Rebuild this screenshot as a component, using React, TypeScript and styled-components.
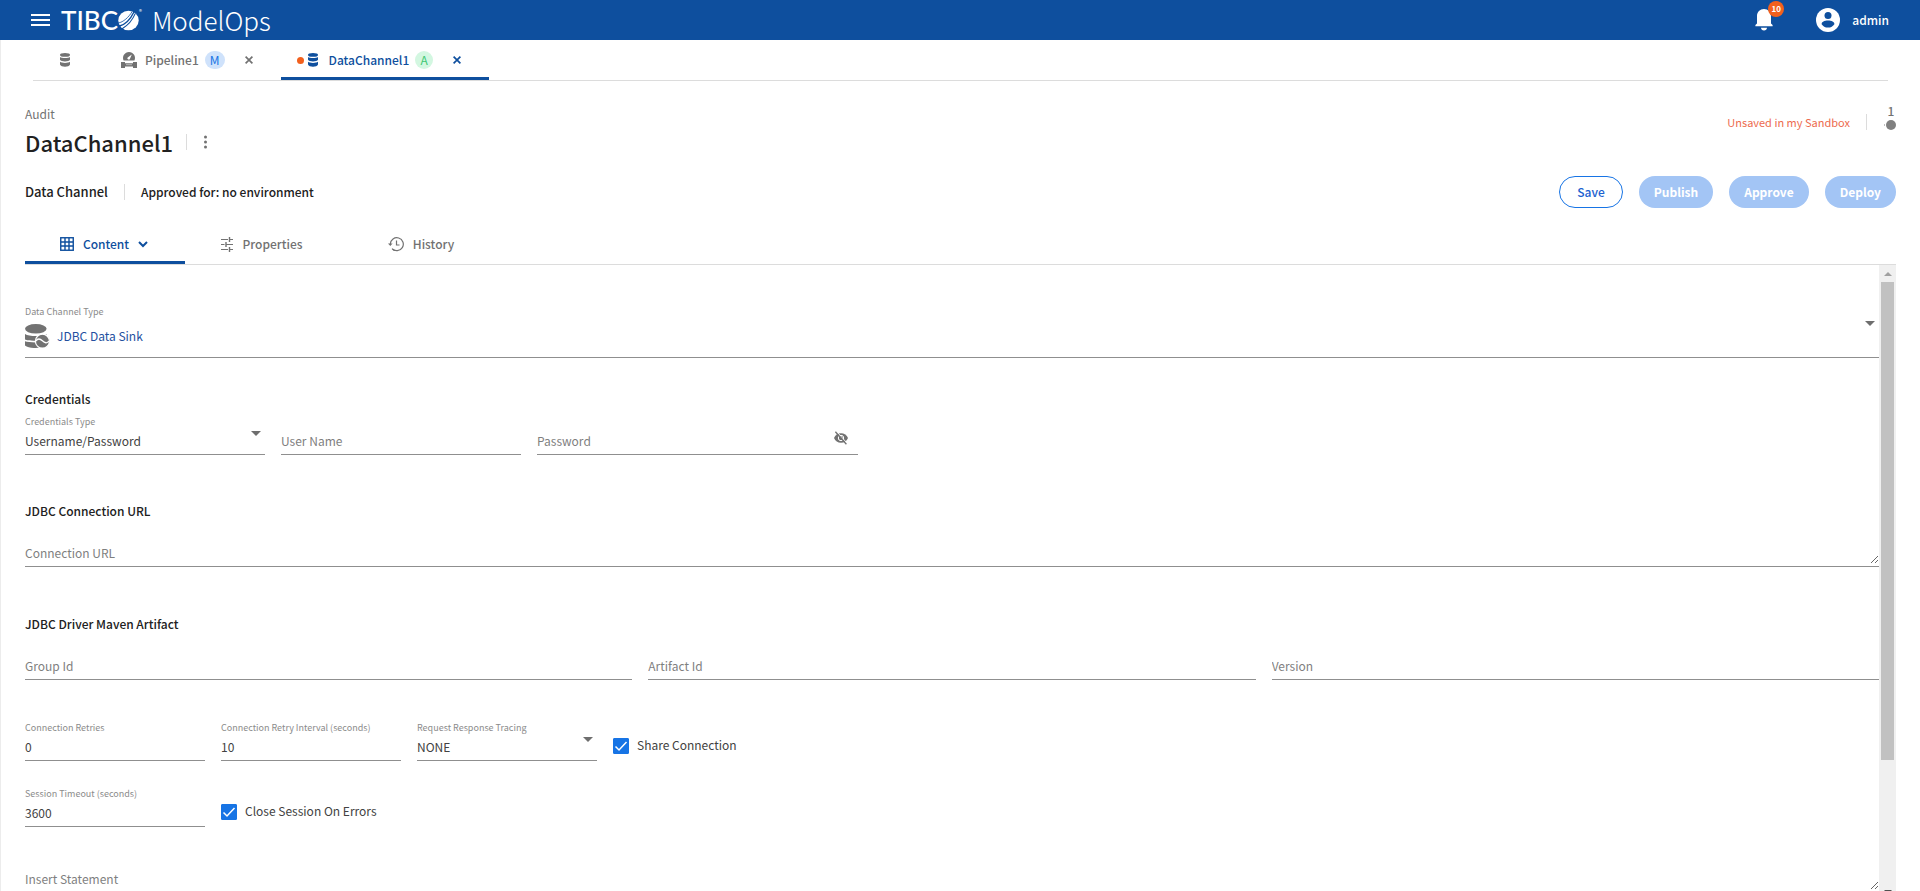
import React, { useState } from "react";
import styled, { createGlobalStyle, css } from "styled-components";

const colors = {
  brand: "#0e4f9e",
  accent: "#1774e5",
  disabled: "#a3c5f5",
  text: "#212121",
  value: "#424242",
  muted: "#727272",
  hint: "#8b8b8b",
  rule: "#dcdcdc",
  underline: "#8f8f8f",
  alert: "#f2601d",
};

const GlobalStyle = createGlobalStyle`
  *, *::before, *::after { box-sizing: border-box; }
  body {
    margin: 0;
    background: #fff;
    color: ${colors.text};
    font-family: "Noto Sans CJK SC", "Noto Sans", sans-serif;
    font-size: 12px;
    line-height: 20px;
  }
  button, input, select, textarea {
    font: inherit;
    color: inherit;
    margin: 0;
    padding: 0;
    border: 0;
    background: none;
    outline: none;
  }
  button { cursor: pointer; }
  a { color: inherit; text-decoration: none; }
  h1, h2, p { margin: 0; }
  svg { display: block; flex: none; }
`;

const Page = styled.div`
  display: flex;
  flex-direction: column;
  height: 100vh;
  overflow: hidden;
`;

const TopBar = styled.header`
  display: flex;
  align-items: center;
  flex: none;
  height: 40px;
  padding: 0 31px 0 30px;
  background: ${colors.brand};
  color: #fff;
`;

const IconButton = styled.button`
  display: flex;
  align-items: center;
  justify-content: center;
`;

const Brand = styled.a`
  display: flex;
  align-items: center;
  margin-left: 11px;
`;

const BrandName = styled.span`
  font-family: Lato, sans-serif;
  font-size: 26px;
  font-weight: 500;
  line-height: 40px;
`;

const Registered = styled.span`
  align-self: flex-start;
  margin-top: 6px;
  font-size: 6px;
  line-height: 12px;
`;

const Product = styled.span`
  margin-left: 10px;
  font-size: 26px;
  font-weight: 300;
  line-height: 40px;
`;

const TopActions = styled.div`
  display: flex;
  align-items: center;
  margin-left: auto;
`;

const BellButton = styled(IconButton)`
  position: relative;
  margin-right: 43px;
`;

const Count = styled.span`
  position: absolute;
  top: -8px;
  right: -11px;
  width: 16px;
  height: 16px;
  border-radius: 8px;
  background: ${colors.alert};
  font-size: 8px;
  font-weight: 700;
  line-height: 16px;
  text-align: center;
`;

const Account = styled.button`
  display: flex;
  align-items: center;
  gap: 12px;
  font-weight: 500;
`;

const Main = styled.main`
  display: flex;
  flex: 1;
  flex-direction: column;
  min-height: 0;
  border-left: 1px solid #ececec;
`;

const OpenTabs = styled.nav`
  display: flex;
  flex: none;
  height: 41px;
  margin: 0 32px;
  border-bottom: 1px solid ${colors.rule};
`;

const OpenTab = styled.div<{ $active?: boolean }>`
  display: flex;
  align-items: center;
  height: 40px;
  padding-top: 3px;
  color: ${(p) => (p.$active ? colors.brand : colors.muted)};
  border-bottom: 3px solid ${(p) => (p.$active ? colors.brand : "transparent")};
  font-weight: 500;
`;

const HomeTab = styled(OpenTab)`
  width: 64px;
  justify-content: center;
`;

const PipelineTab = styled(OpenTab)`
  padding-left: 24px;
  padding-right: 28px;
`;

const ChannelTab = styled(OpenTab)`
  padding-left: 16px;
  padding-right: 28px;
`;

const TabLink = styled.a`
  display: flex;
  align-items: center;
`;

const TabName = styled.span<{ $gap: number }>`
  margin-left: ${(p) => p.$gap}px;
`;

const Tag = styled.span<{ $tone: "blue" | "green" }>`
  min-width: 18px;
  height: 18px;
  margin-left: 6px;
  padding: 0 5px;
  border-radius: 9px;
  line-height: 18px;
  text-align: center;
  font-weight: 400;
  ${(p) =>
    p.$tone === "blue"
      ? css`
          background: #cfe2fb;
          color: #1774e5;
        `
      : css`
          background: #d3f7e1;
          color: #3fc774;
        `}
`;

const CloseButton = styled(IconButton)`
  margin-left: 20px;
`;

const Dirty = styled.span`
  width: 7px;
  height: 7px;
  margin-right: 4px;
  border-radius: 4px;
  background: ${colors.alert};
`;

const Heading = styled.section`
  display: flex;
  flex: none;
  justify-content: space-between;
  padding: 23px 24px 0;
`;

const Crumb = styled.a`
  display: block;
  color: ${colors.muted};
`;

const TitleRow = styled.div`
  display: flex;
  align-items: center;
  height: 36px;
`;

const Title = styled.h1`
  font-size: 22px;
  font-weight: 500;
  line-height: 36px;
`;

const Divider = styled.span`
  width: 1px;
  height: 16px;
  margin: 0 16px;
  background: ${colors.rule};
`;

const TitleDivider = styled(Divider)`
  margin-left: 13px;
`;

const Status = styled.div`
  display: flex;
  align-items: center;
  height: 36px;
  color: #ed6a4e;
  font-size: 11px;
`;

const Revision = styled.div`
  display: flex;
  flex-direction: column;
  align-items: flex-end;
  gap: 2px;
  width: 13px;
  height: 36px;
  color: ${colors.muted};
  font-size: 12px;
  font-weight: 500;
  line-height: 14px;
`;

const RevisionNumber = styled.span`
  width: 10px;
  text-align: center;
`;

const Summary = styled.section`
  display: flex;
  flex: none;
  align-items: center;
  height: 32px;
  margin: 16px 24px 0;
  font-weight: 500;
`;

const Kind = styled.h2`
  font-size: 13px;
  font-weight: 500;
  line-height: 20px;
`;

const Actions = styled.div`
  display: flex;
  gap: 16px;
  margin-left: auto;
`;

const Action = styled.button<{ $outlined?: boolean }>`
  height: 32px;
  padding: 0 15px;
  border-radius: 16px;
  font-weight: 700;
  line-height: 20px;
  ${(p) =>
    p.$outlined
      ? css`
          padding: 0 17px;
          border: 1px solid ${colors.accent};
          color: #1c62d0;
          font-weight: 500;
        `
      : css`
          background: ${colors.disabled};
          color: #fff;
        `}
`;

const ViewTabs = styled.nav`
  display: flex;
  flex: none;
  height: 41px;
  margin: 16px 24px 0;
  border-bottom: 1px solid ${colors.rule};
`;

const ViewTab = styled.button<{ $active?: boolean }>`
  display: flex;
  align-items: center;
  justify-content: center;
  gap: 9px;
  width: 160px;
  height: 40px;
  padding-top: 3px;
  padding-right: ${(p) => (p.$active ? 2 : 8)}px;
  border-bottom: 3px solid ${(p) => (p.$active ? colors.brand : "transparent")};
  color: ${(p) => (p.$active ? colors.brand : colors.muted)};
  font-weight: 500;
`;

const Panel = styled.div`
  display: flex;
  flex: 1;
  min-height: 0;
  margin: 0 24px -9px;
`;

const Form = styled.form`
  flex: 1;
  min-width: 0;
  overflow: hidden;
  padding-top: 34px;
`;

const ScrollBar = styled.div`
  display: flex;
  flex-direction: column;
  flex: none;
  width: 17px;
  background: #f0f0f0;
`;

const ScrollButton = styled.span`
  display: flex;
  align-items: center;
  justify-content: center;
  height: 17px;
`;

const ScrollTrack = styled.div`
  flex: 1;
  padding: 0 2px;
`;

const ScrollThumb = styled.div`
  height: 79.5%;
  background: #c1c1c1;
`;

const Section = styled.fieldset<{ $space: number }>`
  min-width: 0;
  margin: ${(p) => p.$space}px 0 0;
  padding: 0;
  border: 0;
`;

const Legend = styled.legend`
  height: 20px;
  padding: 0;
  font-weight: 500;
  line-height: 20px;
`;

const Row = styled.div<{ $space?: number }>`
  display: flex;
  gap: 16px;
  margin-top: ${(p) => p.$space ?? 0}px;
`;

const FieldBox = styled.div<{ $width?: number }>`
  position: relative;
  display: flex;
  flex-direction: column;
  ${(p) => (p.$width ? `width: ${p.$width}px;` : "flex: 1; min-width: 0;")}
  height: 46px;
  padding-top: 5px;
  border-bottom: 1px solid ${colors.underline};
`;

const TypeBox = styled(FieldBox)`
  height: 59px;
`;

const Label = styled.label`
  height: 16px;
  color: ${colors.hint};
  font-size: 9px;
  line-height: 16px;
`;

const valueStyle = css`
  width: 100%;
  height: 22px;
  color: ${colors.value};
  line-height: 22px;
  &::placeholder {
    color: #7f7f7f;
    opacity: 1;
  }
`;

const Input = styled.input`
  ${valueStyle}
`;

const Select = styled.select`
  ${valueStyle}
  appearance: none;
`;

const TextArea = styled.textarea`
  ${valueStyle}
  resize: vertical;
  overflow: auto;
`;

const TypeRow = styled.div`
  display: flex;
  align-items: center;
  gap: 7px;
  height: 24px;
  margin-top: 4px;
`;

const TypeSelect = styled(Select)`
  color: #24509f;
`;

const Caret = styled.span`
  position: absolute;
  right: 4px;
  top: 22px;
  pointer-events: none;
`;

const Reveal = styled(IconButton)`
  position: absolute;
  right: 10px;
  top: 22px;
  color: ${colors.muted};
`;

const CheckField = styled.div`
  display: flex;
  gap: 8px;
  padding-top: 23px;
  color: ${colors.value};
`;

const Tick = styled.span`
  position: relative;
  width: 16px;
  height: 16px;
  svg {
    position: absolute;
    inset: 0;
    pointer-events: none;
  }
`;

const CheckBox = styled.input`
  display: block;
  width: 16px;
  height: 16px;
  border-radius: 1px;
  appearance: none;
  border: 1px solid ${colors.accent};
  &:checked {
    background: ${colors.accent};
  }
`;

const CheckLabel = styled.label`
  height: 16px;
  line-height: 14px;
`;

const Hamburger = () => (
  <svg width="20" height="14" viewBox="0 0 20 14" fill="currentColor">
    <path d="M1 1h19v2H1zM1 6h19v2H1zM1 11h19v2H1z" />
  </svg>
);

const Globe = () => (
  <svg width="21" height="21" viewBox="0 0 21 21">
    <ellipse cx="10.500" cy="10.500" rx="10.200" ry="9.800" fill="#fff" />
    <g fill="none" stroke={colors.brand} strokeLinecap="round">
      <path d="M1.500 16C7 14.500 12.500 9 15.800 2.200" strokeWidth="1.400" />
      <path d="M4.500 18.400C9.500 15.500 14.500 10 17.200 3.600" strokeWidth="1.100" />
      <path d="M0.500 13C5.500 12 10.500 7.500 14 1.800" strokeWidth="0.800" />
    </g>
  </svg>
);

const Bell = () => (
  <svg width="18" height="22" viewBox="0 0 18 22" fill="currentColor">
    <path d="M9 0C5 0 2 2.900 2 7v7.500L0.400 16V17.200H17.600V16L16 14.500V7C16 2.900 13 0 9 0zM6 18.800h6c0 1.500-1.300 2.700-3 2.700s-3-1.200-3-2.700z" />
  </svg>
);

const Person = () => (
  <svg width="24" height="24" viewBox="0 0 24 24">
    <circle cx="12" cy="12" r="12" fill="#fff" />
    <circle cx="12" cy="7.600" r="3.500" fill={colors.brand} />
    <path
      d="M5.600 16.200c0-2.400 2.800-3.700 6.400-3.700s6.400 1.300 6.400 3.700c-1.300 2-3.600 3.400-6.400 3.400s-5.100-1.400-6.400-3.400z"
      fill={colors.brand}
    />
  </svg>
);

const Database = () => (
  <svg width="10" height="14" viewBox="0 0 10 14" fill="currentColor">
    <ellipse cx="5" cy="1.900" rx="5" ry="1.900" />
    <path d="M0 4C1.500 5.400 8.500 5.400 10 4V6.800C9 9 1 9 0 6.800z" />
    <path d="M0 8.800C1.500 10.300 8.500 10.300 10 8.800V11.600C9 14.600 1 14.600 0 11.600z" />
  </svg>
);

const Pipeline = () => (
  <svg width="16" height="16" viewBox="0 0 16 16" fill="currentColor">
    <path
      d="M8 0a6 6 0 0 0-5.400 8.600h10.800A6 6 0 0 0 8 0zM7 7.300a1.300 1.300 0 0 1-.3-1.900L10.800 2.500 8.900 7a1.300 1.300 0 0 1-1.900.3z"
      fillRule="evenodd"
    />
    <path d="M0 10h4v1.200h8V10h4v6h-4v-1.600H4V16H0z" />
    <path d="M5 12.200h6v1H5z" fill="#fff" fillOpacity="0.500" />
  </svg>
);

const Cross = () => (
  <svg width="8" height="8" viewBox="0 0 8 8" stroke="currentColor" strokeWidth="1.700">
    <path d="M0.600 0.600l6.800 6.800M7.400 0.600L0.600 7.400" />
  </svg>
);

const Kebab = () => (
  <svg width="5" height="14" viewBox="0 0 5 14" fill={colors.muted}>
    <circle cx="2.500" cy="2" r="1.500" />
    <circle cx="2.500" cy="7" r="1.500" />
    <circle cx="2.500" cy="12" r="1.500" />
  </svg>
);

const RevisionDot = () => (
  <svg width="13" height="10" viewBox="0 0 13 10" fill="#808080">
    <circle cx="8" cy="5" r="5" />
    <path d="M1 4.500h1v1H1z" />
  </svg>
);

const Grid = () => (
  <svg width="14" height="14" viewBox="0 0 14 14" fill="none" stroke="currentColor">
    <rect x="0.750" y="0.750" width="12.500" height="12.500" strokeWidth="1.400" />
    <path d="M5 1v12M9 1v12M1 5h12M1 9h12" strokeWidth="1.400" />
  </svg>
);

const Chevron = () => (
  <svg width="10" height="7" viewBox="0 0 10 7" fill="none" stroke="currentColor" strokeWidth="2">
    <path d="M1 1l4 4 4-4" />
  </svg>
);

const Sliders = () => (
  <svg width="14" height="16" viewBox="0 0 14 16" fill="none" stroke="currentColor">
    <path d="M1 3.500h7M1 8.500h3.500M6 8.500h7M1 13.500h7M9.500 3.500H13M9.500 13.500H13" strokeWidth="1.200" />
    <path d="M9.500 1v5M6 6v5M9.500 11v5" strokeWidth="1.400" />
  </svg>
);

const History = () => (
  <svg width="16" height="16" viewBox="0 0 16 16" fill="none" stroke="currentColor">
    <path d="M2.300 8a6.500 6.500 0 1 1 1.700 4.600" strokeWidth="1.200" />
    <path d="M4.600 13.200a6.500 6.500 0 0 0 3 1.300" strokeWidth="1.200" />
    <path d="M8.500 4.600V9h3" strokeWidth="1.200" />
    <path d="M0 7.400h4.600L2.300 10z" fill="currentColor" stroke="none" />
  </svg>
);

const DataSink = () => (
  <svg width="25" height="24" viewBox="0 0 25 24">
    <g fill="#727272">
      <ellipse cx="10.800" cy="4.800" rx="10.800" ry="4.800" />
      <path d="M0 10C4 12.800 17.500 12.800 21.500 10V14C17 17.300 4 17.300 0 15.500z" />
      <path d="M0 17.300C3.500 18.800 17.500 18.800 21 17.300V20.500C17 25 4 25 0 21.500z" />
    </g>
    <circle cx="17.400" cy="17.200" r="7" fill="#727272" stroke="#fff" strokeWidth="1.200" />
    <path
      d="M10.800 17C12.800 14.200 15 14.500 17.400 16.800S22 19.600 24 17.200"
      fill="none"
      stroke="#fff"
      strokeWidth="1.300"
    />
  </svg>
);

const DownCaret = () => (
  <svg width="10" height="5" viewBox="0 0 10 5" fill="#6e6e6e">
    <path d="M0 0h10L5 5z" />
  </svg>
);

const EyeOff = () => (
  <svg width="14" height="14" viewBox="0 0 14 14">
    <path
      d="M7 2.200C3.800 2.200 1.200 4.100 0 7c1.200 2.900 3.800 4.800 7 4.800S12.800 9.900 14 7C12.800 4.100 10.200 2.200 7 2.200z"
      fill="currentColor"
    />
    <circle cx="7" cy="7" r="2.700" fill="none" stroke="#fff" strokeWidth="1" />
    <path d="M2.400 0.300l11 12.200" stroke="#fff" strokeWidth="1" />
    <path d="M1.400 0.800l11 12.400" stroke="currentColor" strokeWidth="1.300" />
  </svg>
);

const TickMark = () => (
  <svg width="16" height="16" viewBox="0 0 16 16" fill="none" stroke="#fff" strokeWidth="1.500">
    <path d="M2.500 8.500l3.500 3.500 7.500-8" />
  </svg>
);

const ArrowUp = () => (
  <svg width="8" height="4" viewBox="0 0 8 4" fill="#a0a0a0">
    <path d="M4 0l4 4H0z" />
  </svg>
);

const ArrowDown = () => (
  <svg width="8" height="4" viewBox="0 0 8 4" fill="#505050">
    <path d="M0 0h8L4 4z" />
  </svg>
);

type FieldProps = {
  id: string;
  label?: string;
  placeholder?: string;
  value?: string;
  width?: number;
  type?: string;
  children?: React.ReactNode;
};

const TextField = ({ id, label, placeholder, value, width, type = "text", children }: FieldProps) => (
  <FieldBox $width={width}>
    <Label htmlFor={id}>{label}</Label>
    <Input id={id} type={type} placeholder={placeholder} aria-label={label ?? placeholder} defaultValue={value} />
    {children}
  </FieldBox>
);

const SelectField = ({ id, label, value, width }: FieldProps) => (
  <FieldBox $width={width}>
    <Label htmlFor={id}>{label}</Label>
    <Select id={id}>
      <option>{value}</option>
    </Select>
    <Caret>
      <DownCaret />
    </Caret>
  </FieldBox>
);

const AreaField = ({ id, placeholder }: FieldProps) => (
  <FieldBox>
    <Label htmlFor={id} />
    <TextArea id={id} placeholder={placeholder} aria-label={placeholder} />
  </FieldBox>
);

const CheckOption = ({ id, label }: { id: string; label: string }) => {
  const [on, setOn] = useState(true);
  return (
    <CheckField>
      <Tick>
        <CheckBox id={id} type="checkbox" checked={on} onChange={() => setOn(!on)} />
        {on && <TickMark />}
      </Tick>
      <CheckLabel htmlFor={id}>{label}</CheckLabel>
    </CheckField>
  );
};

export default function App() {
  return (
    <Page>
      <GlobalStyle />
      <TopBar>
        <IconButton aria-label="Menu">
          <Hamburger />
        </IconButton>
        <Brand href="#">
          <BrandName>TIBC</BrandName>
          <Globe />
          <Registered>®</Registered>
          <Product>ModelOps</Product>
        </Brand>
        <TopActions>
          <BellButton aria-label="Notifications">
            <Bell />
            <Count>10</Count>
          </BellButton>
          <Account>
            <Person />
            admin
          </Account>
        </TopActions>
      </TopBar>

      <Main>
        <OpenTabs>
          <HomeTab>
            <TabLink href="#" aria-label="Data channels">
              <Database />
            </TabLink>
          </HomeTab>
          <PipelineTab>
            <TabLink href="#">
              <Pipeline />
              <TabName $gap={8}>Pipeline1</TabName>
              <Tag $tone="blue">M</Tag>
            </TabLink>
            <CloseButton aria-label="Close Pipeline1">
              <Cross />
            </CloseButton>
          </PipelineTab>
          <ChannelTab $active>
            <TabLink href="#">
              <Dirty />
              <Database />
              <TabName $gap={11}>DataChannel1</TabName>
              <Tag $tone="green">A</Tag>
            </TabLink>
            <CloseButton aria-label="Close DataChannel1">
              <Cross />
            </CloseButton>
          </ChannelTab>
        </OpenTabs>

        <Heading>
          <div>
            <Crumb href="#">Audit</Crumb>
            <TitleRow>
              <Title>DataChannel1</Title>
              <TitleDivider />
              <IconButton aria-label="More actions">
                <Kebab />
              </IconButton>
            </TitleRow>
          </div>
          <Status>
            Unsaved in my Sandbox
            <Divider />
            <Revision>
              <RevisionNumber>1</RevisionNumber>
              <RevisionDot />
            </Revision>
          </Status>
        </Heading>

        <Summary>
          <Kind>Data Channel</Kind>
          <Divider />
          <p>Approved for: no environment</p>
          <Actions>
            <Action $outlined>Save</Action>
            <Action disabled>Publish</Action>
            <Action disabled>Approve</Action>
            <Action disabled>Deploy</Action>
          </Actions>
        </Summary>

        <ViewTabs>
          <ViewTab $active>
            <Grid />
            Content
            <Chevron />
          </ViewTab>
          <ViewTab>
            <Sliders />
            Properties
          </ViewTab>
          <ViewTab>
            <History />
            History
          </ViewTab>
        </ViewTabs>

        <Panel>
          <Form>
            <TypeBox>
              <Label htmlFor="channel-type">Data Channel Type</Label>
              <TypeRow>
                <DataSink />
                <TypeSelect id="channel-type">
                  <option>JDBC Data Sink</option>
                </TypeSelect>
              </TypeRow>
              <Caret>
                <DownCaret />
              </Caret>
            </TypeBox>

            <Section $space={31}>
              <Legend>Credentials</Legend>
              <Row>
                <SelectField id="cred-type" label="Credentials Type" value="Username/Password" width={240} />
                <TextField id="user" placeholder="User Name" width={240} />
                <TextField id="password" type="password" placeholder="Password" width={321}>
                  <Reveal type="button" aria-label="Show password">
                    <EyeOff />
                  </Reveal>
                </TextField>
              </Row>
            </Section>

            <Section $space={46}>
              <Legend>JDBC Connection URL</Legend>
              <AreaField id="url" placeholder="Connection URL" />
            </Section>

            <Section $space={47}>
              <Legend>JDBC Driver Maven Artifact</Legend>
              <Row>
                <TextField id="group" placeholder="Group Id" />
                <TextField id="artifact" placeholder="Artifact Id" />
                <TextField id="version" placeholder="Version" />
              </Row>
            </Section>

            <Row $space={35}>
              <TextField id="retries" label="Connection Retries" value="0" width={180} />
              <TextField id="interval" label="Connection Retry Interval (seconds)" value="10" width={180} />
              <SelectField id="tracing" label="Request Response Tracing" value="NONE" width={180} />
              <CheckOption id="share" label="Share Connection" />
            </Row>
            <Row $space={20}>
              <TextField id="timeout" label="Session Timeout (seconds)" value="3600" width={180} />
              <CheckOption id="close" label="Close Session On Errors" />
            </Row>
            <Row $space={20}>
              <AreaField id="insert" placeholder="Insert Statement" />
            </Row>
          </Form>
          <ScrollBar aria-hidden="true">
            <ScrollButton>
              <ArrowUp />
            </ScrollButton>
            <ScrollTrack>
              <ScrollThumb />
            </ScrollTrack>
            <ScrollButton>
              <ArrowDown />
            </ScrollButton>
          </ScrollBar>
        </Panel>
      </Main>
    </Page>
  );
}
